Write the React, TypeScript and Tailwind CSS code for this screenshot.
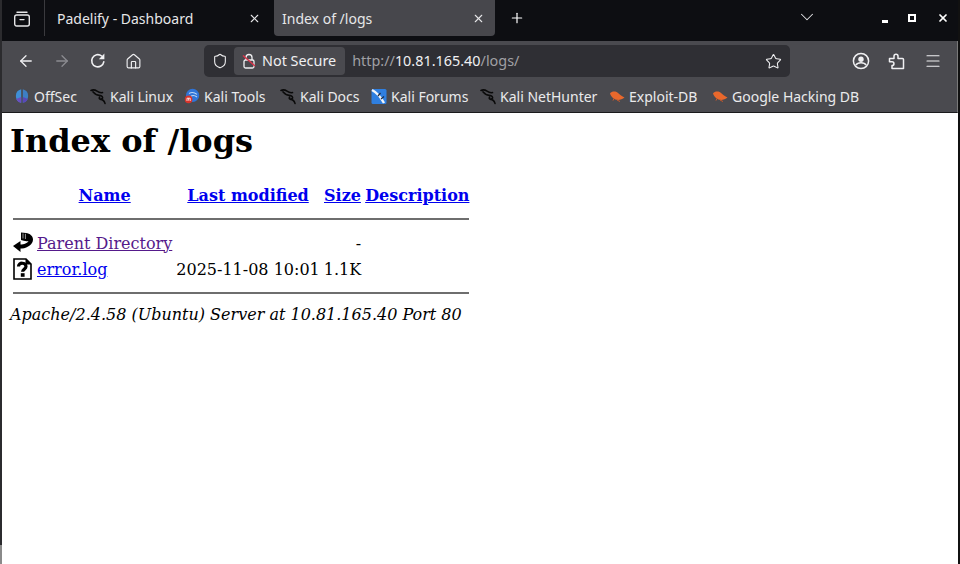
import React from "react";
import { ArrowLeft, ArrowRight, Home, Shield, Star, Menu, X, Plus, ChevronDown } from "lucide-react";

const DragonIcon = () => (
  <svg width="18" height="18" viewBox="0 0 18 18" fill="none" stroke="#0a0a0a" strokeWidth="1.6" strokeLinecap="round" strokeLinejoin="round">
    <path d="M1 3.5C3 2.5 5 2.8 7 4.2C9 5.6 11 6 12.5 5.6" />
    <path d="M3 4.8L5.5 7.2C7 8.4 9.5 8.2 11 8.8C13 9.6 13.2 11.4 11.4 12C9.6 12.6 8.6 11.4 9.6 10.4" />
    <path d="M10.6 12.4C12.6 12.6 14.2 13.6 15 16.4" />
  </svg>
);

const OffSecIcon = () => (
  <svg width="16" height="16" viewBox="0 0 16 16">
    <path d="M7.2 1.2A7 7 0 0 0 7.2 14.8Z" fill="#3f8fd6" />
    <path d="M8.8 1.2A7 7 0 0 1 8.8 14.8Z" fill="#3d7fc4" />
    <path d="M2 11A7 7 0 0 0 7.2 14.8V9Z" fill="#6a4fc0" />
    <path d="M14 11A7 7 0 0 1 8.8 14.8V9Z" fill="#5a48b8" />
  </svg>
);

const KaliToolsIcon = () => (
  <svg width="16" height="16" viewBox="0 0 16 16">
    <circle cx="8.6" cy="7.4" r="6.6" fill="#2f74d8" />
    <path d="M5 5.5C7.5 4 10.5 4.4 13 6.4M7 8C9 7 11 7.4 13 9" stroke="#bcd6f5" strokeWidth="1.1" fill="none" />
    <circle cx="4.6" cy="11.4" r="3.8" fill="#d9342b" />
    <path d="M3 13V10.2H6.2V13M4.6 10.2V12.6" stroke="#fff" strokeWidth="0.8" fill="none" />
  </svg>
);

const ForumsIcon = () => (
  <svg width="16" height="16" viewBox="0 0 16 16">
    <rect x="0.5" y="1" width="15" height="15" rx="1.5" fill="#2f7fe0" />
    <path d="M1 2C5 4 9 8 13 15" stroke="#f2f5f9" strokeWidth="2.4" fill="none" />
    <path d="M7 8L9.5 5M10 11L13 8.5" stroke="#1c2b44" strokeWidth="1.2" fill="none" />
  </svg>
);

const ExploitIcon = () => (
  <svg width="16" height="16" viewBox="0 0 16 16">
    <path d="M1 5.5C3 3 6.5 3 9 5C11 6.8 13 8.2 15.5 9.4C13.4 10.8 10.6 12.4 7.6 11.8C4.6 11.2 1.8 8.4 1 5.5Z" fill="#e8682c" />
    <path d="M8 12L11 13.5M5 10.4L4 12.6" stroke="#c9582a" strokeWidth="1" />
  </svg>
);

const ReloadIcon = () => (
  <svg width="18" height="18" viewBox="0 0 18 18" fill="none">
    <path d="M14.8 9.8A6.1 6.1 0 1 1 12.6 4" stroke="#f0f0f2" strokeWidth="1.6" strokeLinecap="round" />
    <path d="M15.4 1.6V7.2H9.8Z" fill="#f0f0f2" />
  </svg>
);

const ProfileIcon = () => (
  <svg width="18" height="18" viewBox="0 0 18 18" fill="none" stroke="#f0f0f2">
    <circle cx="9" cy="9" r="7.6" strokeWidth="1.5" />
    <circle cx="9" cy="7.2" r="2.7" fill="#f0f0f2" strokeWidth="0" />
    <path d="M3.8 13C5 11.2 7 10.8 9 10.8C11 10.8 13 11.2 14.2 13" strokeWidth="1.5" />
  </svg>
);

const ExtensionIcon = () => (
  <svg width="18" height="18" viewBox="0 0 18 18" fill="none" stroke="#f0f0f2" strokeWidth="1.5" strokeLinejoin="round">
    <path d="M1.5 6.5H6V4.2C6 1.6 10 1.6 10 4.2V6.5H14.5C15.2 6.5 15.5 6.9 15.5 7.5V16.5H4V13.5C6.6 13.5 6.6 9.8 4 9.8H1.5Z" />
  </svg>
);

const BackIcon = () => (
  <svg width="20" height="22" viewBox="0 0 20 22" className="block" fill="#000">
    <path d="M8 0.5L13 1C17 1.5 20 4 20 7.5C20 12 15 16 9 16.5H7.5V20L0 14L7.5 9V12.5C11 12.5 14.5 11 15.5 9C13 9.5 10.5 9 8 8Z" />
    <path d="M10 1.5V6.5M12.4 1.8V7" stroke="#9a9a9a" strokeWidth="1" fill="none" />
  </svg>
);

const UnknownIcon = () => (
  <svg width="20" height="22" viewBox="0 0 20 22" className="block">
    <path d="M1 1H13L18 6V21H1Z" fill="#fff" stroke="#000" strokeWidth="1.6" />
    <path d="M13 1L18 6H13Z" fill="#000" stroke="#000" strokeWidth="1" />
    <path d="M5.5 8.6C5.5 4 13 4.2 13 8.6C13 11.2 9.6 11 9.6 13.8" fill="none" stroke="#000" strokeWidth="3.2" />
    <rect x="7.8" y="15.2" width="3.8" height="3.6" fill="#000" />
  </svg>
);

const bookmarks = [
  { icon: <OffSecIcon />, label: "OffSec", width: "w-[76px]" },
  { icon: <DragonIcon />, label: "Kali Linux", width: "w-[94px]" },
  { icon: <KaliToolsIcon />, label: "Kali Tools", width: "w-[96px]" },
  { icon: <DragonIcon />, label: "Kali Docs", width: "w-[91px]" },
  { icon: <ForumsIcon />, label: "Kali Forums", width: "w-[109px]" },
  { icon: <DragonIcon />, label: "Kali NetHunter", width: "w-[129px]" },
  { icon: <ExploitIcon />, label: "Exploit-DB", width: "w-[103px]" },
  { icon: <ExploitIcon />, label: "Google Hacking DB", width: "w-[150px]" },
];

const App: React.FunctionComponent = () => {
  return (
    <div className="flex h-[564px] w-[960px] overflow-hidden bg-white font-['Noto_Sans',sans-serif]">
      <div className="flex w-[2px] shrink-0 flex-col">
        <div className="flex-1 bg-[#2b2b2e]" />
        <div className="h-[19px] bg-[#8a8a8a]" />
      </div>

      <div className="flex min-w-0 flex-1 flex-col">
        {/* Tab strip */}
        <div className="flex h-[41px] shrink-0 items-start bg-[#0d0e12] text-[14px] text-[#e6e6e8]">
          <div className="flex h-[36px] w-[43px] items-center justify-center border-r border-[#3a3a3e]">
            <svg width="18" height="16" viewBox="0 0 18 16" fill="none" stroke="#e6e6e8" strokeWidth="1.4" className="ml-[-2px] mt-[1px]">
              <rect x="1.7" y="4" width="14.6" height="11" rx="2" />
              <path d="M4 1.2H14M7 8.6H11" strokeLinecap="round" />
            </svg>
          </div>
          <div className="flex h-[36px] w-[229px] items-center justify-between pl-[12px] pr-[13px]">
            <span>Padelify - Dashboard</span>
            <X size={13} strokeWidth={2} />
          </div>
          <div className="flex h-[36px] w-[221px] items-center justify-between rounded-b-[4px] bg-[#47474c] pl-[8px] pr-[10px]">
            <span>Index of /logs</span>
            <X size={13} strokeWidth={2} />
          </div>
          <div className="ml-[14px] flex h-[36px] items-center">
            <Plus size={16} strokeWidth={1.8} className="text-white" />
          </div>
          <div className="ml-[271px] flex h-[34px] items-center">
            <ChevronDown size={22} strokeWidth={1.1} />
          </div>
          <div className="ml-[64px] flex h-[36px] items-center gap-[20px]">
            <div className="mt-[7px] h-[2.5px] w-[6px] bg-white" />
            <div className="size-[8px] border-[2.5px] border-white" />
            <X size={12} strokeWidth={3.5} className="ml-[1px] text-white" />
          </div>
        </div>

        {/* Toolbar */}
        <div className="flex h-[37px] shrink-0 items-center border-r border-[#7a7a7a] bg-[#4a4a4f] pt-[3px] text-[#f0f0f2]">
          <div className="flex items-center pl-[15px]">
            <ArrowLeft size={18} strokeWidth={1.7} />
            <ArrowRight size={18} strokeWidth={1.7} className="ml-[18px] text-[#8c8c91]" />
            <div className="ml-[18px]"><ReloadIcon /></div>
            <Home size={17} strokeWidth={1.6} className="ml-[18px]" />
          </div>
          <div className="ml-[62px] flex h-[32px] w-[586px] items-center rounded-[5px] bg-[#2f2f34]">
            <Shield size={16} strokeWidth={1.6} className="ml-[8px] shrink-0" />
            <div className="ml-[6px] flex h-[28px] items-center rounded-[4px] bg-[#4a4a4f] pl-[8px] pr-[9px] text-[14.4px]">
              <svg width="14" height="16" viewBox="0 0 14 16" fill="none" className="mr-[6px]">
                <rect x="2" y="7" width="10" height="8" rx="1.5" stroke="#f0f0f2" strokeWidth="1.3" />
                <path d="M4 7V4.5a3 3 0 0 1 6 0V7" stroke="#f0f0f2" strokeWidth="1.3" />
                <path d="M1 2.5L13 13" stroke="#d8344a" strokeWidth="1.6" />
              </svg>
              <span>Not Secure</span>
            </div>
            <span className="ml-[7px] text-[14.4px] text-[#a0a0a5]">
              http://<span className="text-[#f0f0f2]">10.81.165.40</span>/logs/
            </span>
            <Star size={17} strokeWidth={1.5} className="ml-auto mr-[8px]" />
          </div>
          <div className="ml-auto flex items-center gap-[18px] pr-[15px]">
            <ProfileIcon />
            <ExtensionIcon />
            <Menu size={18} strokeWidth={1.5} />
          </div>
        </div>

        {/* Bookmarks */}
        <div className="flex h-[35px] shrink-0 items-center border-b border-r border-b-[#1a1a1c] border-r-[#7a7a7a] bg-[#4a4a4f] pl-[12px] pt-[2px] text-[14px] text-[#eaeaec]">
          {bookmarks.map((b) => (
            <div key={b.label} className={`flex items-center ${b.width}`}>
              <div className="w-[20px] shrink-0">{b.icon}</div>
              <span>{b.label}</span>
            </div>
          ))}
        </div>

        {/* Page */}
        <div className="flex-1 pl-[8px] pt-[8px] font-['DejaVu_Serif',serif] text-[16px] text-black">
          <h1 className="my-[1px] text-[32px] font-bold leading-[38px]">Index of /logs</h1>
          <table className="mt-[23px] border-separate border-spacing-[2px] leading-[19px]">
            <tbody>
              <tr>
                <th className="p-[1px]" />
                <th className="p-[1px]"><a className="text-[#0000ee] underline">Name</a></th>
                <th className="p-[1px]"><a className="text-[#0000ee] underline">Last modified</a></th>
                <th className="p-[1px]"><a className="text-[#0000ee] underline">Size</a></th>
                <th className="p-[1px]"><a className="text-[#0000ee] underline">Description</a></th>
              </tr>
              <tr>
                <th colSpan={5} className="p-[1px]">
                  <hr className="mb-[8px] mt-[9px] border-t-2 border-[#6e6e6e]" />
                </th>
              </tr>
              <tr>
                <td className="p-[1px]"><BackIcon /></td>
                <td className="p-[1px]"><a className="text-[#551a8b] underline">Parent Directory</a></td>
                <td className="p-[1px] text-right" />
                <td className="p-[1px] text-right">-</td>
                <td className="p-[1px]" />
              </tr>
              <tr>
                <td className="p-[1px]"><UnknownIcon /></td>
                <td className="p-[1px]"><a className="text-[#0000ee] underline">error.log</a></td>
                <td className="p-[1px] text-right">2025-11-08 10:01</td>
                <td className="p-[1px] text-right">1.1K</td>
                <td className="p-[1px]" />
              </tr>
              <tr>
                <th colSpan={5} className="p-[1px]">
                  <hr className="mb-[6px] mt-[8px] border-t-2 border-[#6e6e6e]" />
                </th>
              </tr>
            </tbody>
          </table>
          <address className="italic">Apache/2.4.58 (Ubuntu) Server at 10.81.165.40 Port 80</address>
        </div>
      </div>

      <div className="w-[2px] shrink-0 bg-[#111]" />
    </div>
  );
};

export default App;
